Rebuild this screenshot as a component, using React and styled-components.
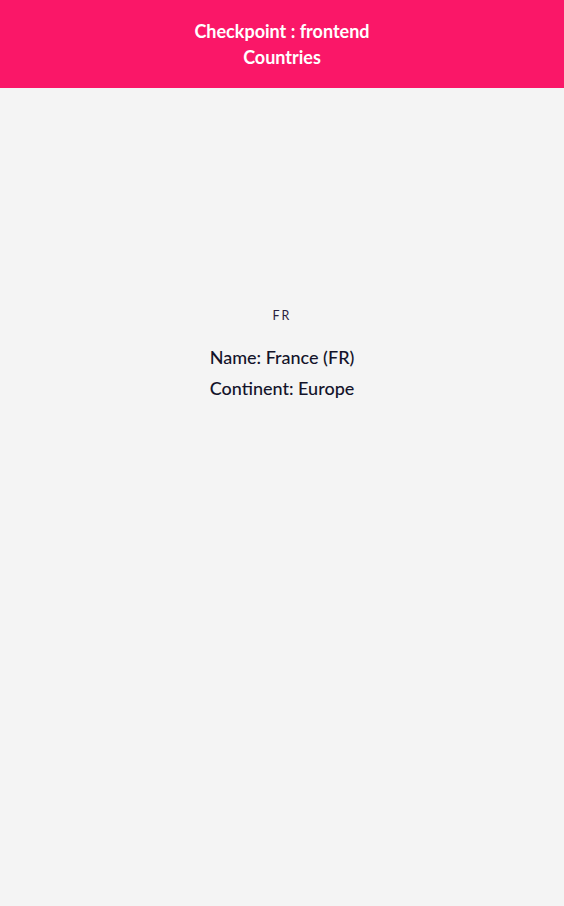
import React from "react";
import styled, { createGlobalStyle } from "styled-components";

const Global = createGlobalStyle`
  html, body { margin: 0; padding: 0; background: #f4f4f4; }
  body { font-family: "Segoe UI", Lato, "Open Sans", sans-serif; }
`;

const Page = styled.div`
  min-height: 906px;
  background: #f4f4f4;
  display: flex;
  flex-direction: column;
`;

const Header = styled.header`
  background: #fa1768;
  color: #ffffff;
  height: 88px;
  box-sizing: border-box;
  display: flex;
  flex-direction: column;
  align-items: center;
  justify-content: center;
  text-align: center;
`;

const HeaderLine = styled.div`
  font-size: 18px;
  font-weight: 700;
  line-height: 26px;
`;

const Main = styled.main`
  display: flex;
  flex-direction: column;
  align-items: center;
  padding-top: 220px;
  color: #13132a;
`;

const Flag = styled.div`
  font-size: 12.5px;
  letter-spacing: 2px;
  line-height: 16px;
  color: #2a2040;
  margin-bottom: 18px;
`;

const InfoLine = styled.div`
  font-size: 18px;
  font-weight: 500;
  line-height: 31px;
`;

export default function App() {
  return (
    <Page>
      <Global />
      <Header>
        <HeaderLine>Checkpoint : frontend</HeaderLine>
        <HeaderLine>Countries</HeaderLine>
      </Header>
      <Main>
        <Flag>FR</Flag>
        <InfoLine>Name: France (FR)</InfoLine>
        <InfoLine>Continent: Europe</InfoLine>
      </Main>
    </Page>
  );
}
